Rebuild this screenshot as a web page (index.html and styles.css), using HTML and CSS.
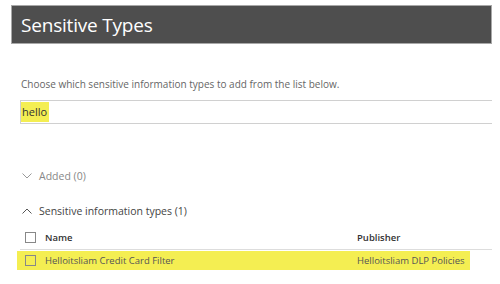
FILE: index.html
```html
<!DOCTYPE html>
<html lang="en">
<head>
  <meta charset="UTF-8" />
  <title>Sensitive Types</title>
  <link rel="stylesheet" href="styles.css">
</head>
<body>
  <div class="panel">
    <div class="header">
      <h1>Sensitive Types</h1>
    </div>

    <div class="content">
      <p class="intro">Choose which sensitive information types to add from the list below.</p>

      <div class="search">
        <span class="mark">hello</span>
      </div>

      <div class="group group-added">
        <svg class="chev" width="10" height="6" viewBox="0 0 10 6"><path d="M0.5 0.5 L5 5 L9.5 0.5" fill="none" stroke="#999" stroke-width="1"/></svg>
        <span>Added (0)</span>
      </div>

      <div class="group group-types">
        <svg class="chev" width="10" height="6" viewBox="0 0 10 6"><path d="M0.5 5.5 L5 1 L9.5 5.5" fill="none" stroke="#555" stroke-width="1"/></svg>
        <span>Sensitive information types (1)</span>
      </div>

      <div class="table">
        <div class="row row-head">
          <span class="check"></span>
          <span class="col-name">Name</span>
          <span class="col-pub">Publisher</span>
        </div>
        <div class="row row-item">
          <span class="check"></span>
          <span class="col-name">Helloitsliam Credit Card Filter</span>
          <span class="col-pub">Helloitsliam DLP Policies</span>
        </div>
      </div>
    </div>
  </div>
</body>
</html>
```

FILE: styles.css
```css
body {
  margin: 0;
  background: #fff;
  font-family: 'Open Sans', 'Noto Sans', sans-serif;
  color: #444;
}

.panel {
  width: 500px;
  height: 284px;
  overflow: hidden;
}

.header {
  margin: 5px 8px 0 11px;
  height: 37px;
  background: #4e4e4e;
  border: 1px solid #a8a8a8;
  display: flex;
  align-items: center;
  padding-left: 9px;
}

.header h1 {
  margin: 0;
  font-weight: 400;
  font-size: 19px;
  color: #fff;
  letter-spacing: -0.2px;
}

.content {
  padding: 0 8px 0 20px;
}

.intro {
  margin: 33px 0 0 1px;
  font-size: 10px;
  color: #666;
  line-height: 14px;
}

.search {
  margin-top: 9px;
  height: 22px;
  border-top: 1px solid #d0d0d0;
  border-bottom: 1px solid #d0d0d0;
  border-left: 1px solid #d0d0d0;
  display: flex;
  align-items: center;
}

.mark {
  background: #f4ee52;
  font-size: 11px;
  color: #333;
  padding: 3px 2px 3px 1px;
  line-height: 14px;
}

.group {
  display: flex;
  align-items: center;
  gap: 7px;
  padding-left: 2px;
  font-size: 10.5px;
}

.group-added {
  margin-top: 45px;
  color: #888;
}

.group-types {
  margin-top: 21px;
  color: #444;
}

.table {
  margin-top: 8px;
}

.row {
  display: flex;
  align-items: center;
  height: 19px;
  font-size: 9.5px;
}

.row-head {
  font-weight: 600;
  color: #333;
  height: 23px;
  border-bottom: 1px solid #ddd;
}

.row-item {
  margin-top: 1px;
  margin-left: -3px;
  padding-left: 3px;
  width: 450px;
  background: #f4ee52;
  color: #555;
}

.check {
  width: 9px;
  height: 9px;
  border: 1px solid #888;
  margin-left: 5px;
  flex: none;
}

.col-name {
  margin-left: 9px;
  width: 312px;
}

.col-pub {
  flex: none;
}
```
